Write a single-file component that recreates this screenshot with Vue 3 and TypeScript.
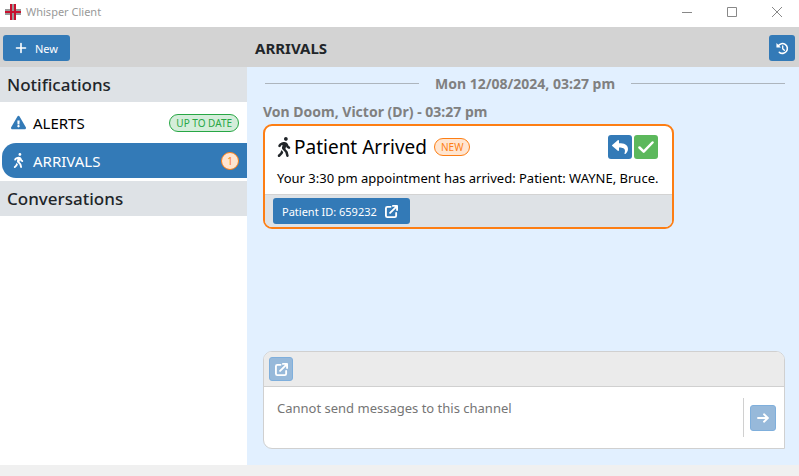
<script setup lang="ts">
import { ref } from 'vue'

interface Channel {
  name: string
  icon: 'alert' | 'walk'
  badge: string
  tone: 'ok' | 'new'
}

const channels: Channel[] = [
  { name: 'ALERTS', icon: 'alert', badge: 'UP TO DATE', tone: 'ok' },
  { name: 'ARRIVALS', icon: 'walk', badge: '1', tone: 'new' },
]
const active = ref('ARRIVALS')
const draft = ref('')
</script>

<template>
  <div class="window">
    <svg class="defs" width="0" height="0" aria-hidden="true">
      <symbol id="i-walk" viewBox="0 0 320 512">
        <path d="M208 96c26.500 0 48-21.500 48-48S234.500 0 208 0s-48 21.500-48 48 21.500 48 48 48zm94.500 149.100l-23.300-11.800-9.700-29.400c-14.700-44.600-55.700-75.800-102.200-75.900-36-.1-55.900 10.100-93.300 25.200-21.600 8.700-39.300 25.200-49.700 46.200L17.600 213c-7.800 15.800-1.500 35 14.200 42.900 15.600 7.900 34.600 1.500 42.500-14.300L81 228c3.500-7 9.300-12.500 16.500-15.400l26.800-10.800-15.200 60.700c-5.200 20.800.4 42.900 14.900 58.800l59.900 65.400c7.200 7.900 12.300 17.400 14.900 27.700l18.300 73.300c4.300 17.100 21.700 27.600 38.800 23.300 17.100-4.300 27.600-21.700 23.300-38.800l-22.200-89c-2.600-10.300-7.700-19.900-14.900-27.700l-45.500-49.700 17.200-68.700 5.500 16.500c5.300 16.100 16.700 29.400 31.700 37l23.300 11.800c15.600 7.900 34.600 1.500 42.500-14.300 7.700-15.700 1.400-35.100-14.300-43zM73.600 385.800c-3.200 8.100-8 15.400-14.200 21.500l-50 50.100c-12.500 12.500-12.500 32.800 0 45.300s32.700 12.500 45.200 0l59.400-59.400c6.100-6.100 10.900-13.400 14.200-21.500l13.500-33.800c-55.300-60.300-38.700-41.800-47.400-53.700l-20.700 51.500z" />
      </symbol>
      <symbol id="i-alert" viewBox="0 0 576 512">
        <path d="M569.517 440.013C587.975 472.007 564.806 512 527.940 512H48.054c-36.937 0-59.999-40.055-41.577-71.987L246.423 23.985c18.467-32.009 64.720-31.951 83.154 0l239.940 416.028zM288 354c-25.405 0-46 20.595-46 46s20.595 46 46 46 46-20.595 46-46-20.595-46-46-46zm-43.673-165.346l7.418 136c.347 6.364 5.609 11.346 11.982 11.346h48.546c6.373 0 11.635-4.982 11.982-11.346l7.418-136c.375-6.874-5.098-12.654-11.982-12.654h-63.383c-6.884 0-12.356 5.780-11.981 12.654z" />
      </symbol>
      <symbol id="i-reply" viewBox="0 0 512 512">
        <path d="M8.309 189.836L184.313 37.851C199.719 24.546 224 35.347 224 56.015v80.053c160.629 1.839 288 34.032 288 186.258 0 61.441-39.581 122.309-83.333 154.132-13.653 9.931-33.111-2.533-28.077-18.631 45.344-145.012-21.507-183.510-176.590-185.742V360c0 20.700-24.300 31.453-39.687 18.164l-176.004-152c-11.071-9.562-11.086-26.753 0-36.328z" />
      </symbol>
      <symbol id="i-open" viewBox="0 0 14 14">
        <path d="M6 2H2.500Q1 2 1 3.500v8Q1 13 2.500 13h8Q12 13 12 11.500V8.500M8.500 1H13v4.500M12.600 1.400L5.500 8.500" fill="none" stroke="currentColor" stroke-width="2" stroke-linecap="round" stroke-linejoin="round" />
      </symbol>
    </svg>

    <header class="titlebar">
      <svg class="logo" viewBox="0 0 16 16" aria-hidden="true">
        <path d="M0 5h16v6H0zM7 0h2v16H7z" fill="#999" />
        <path d="M0 7h16v2H0zM5 0h2v16H5zM9 0h2v16H9z" fill="#c8102e" />
      </svg>
      <span class="app-name">Whisper Client</span>
      <div class="window-controls">
        <button type="button" aria-label="Minimize"><svg viewBox="0 0 12 12"><path d="M1 6.500h10" /></svg></button>
        <button type="button" aria-label="Maximize"><svg viewBox="0 0 12 12"><path d="M1.500 1.500h9v9h-9z" /></svg></button>
        <button type="button" aria-label="Close"><svg viewBox="0 0 12 12"><path d="M1 1l10 10M11 1L1 11" /></svg></button>
      </div>
    </header>

    <div class="toolbar">
      <div class="toolbar-side">
        <button type="button" class="btn new-btn">
          <svg class="plus" viewBox="0 0 12 12" aria-hidden="true"><path d="M6 1.500v9M1.500 6h9" fill="none" stroke="currentColor" stroke-width="1.600" stroke-linecap="round" /></svg>
          New
        </button>
      </div>
      <h1>ARRIVALS</h1>
      <button type="button" class="btn square" aria-label="History">
        <svg class="icon14" viewBox="0 0 14 14" fill="none" aria-hidden="true">
          <path class="line" d="M2.400 4.200A5.300 5.300 0 1 1 3.600 11.100" stroke-width="1.700" />
          <path class="line" d="M7.200 4.300v2.900l1.800 1.700" stroke-width="1.400" />
          <path d="M.5 1v4.800h4.800z" />
        </svg>
      </button>
    </div>

    <div class="content">
      <nav class="sidebar">
        <h2>Notifications</h2>
        <div class="channels">
          <button
            v-for="c in channels"
            :key="c.name"
            type="button"
            class="channel"
            :class="{ active: active === c.name }"
            @click="active = c.name"
          >
            <svg class="channel-icon" aria-hidden="true"><use :href="'#i-' + c.icon" /></svg>
            <span class="channel-name">{{ c.name }}</span>
            <span class="badge" :class="[c.tone, { count: c.badge.length === 1 }]">{{ c.badge }}</span>
          </button>
        </div>
        <h2>Conversations</h2>
      </nav>

      <main class="chat">
        <div class="feed">
          <div class="date-row">Mon 12/08/2024, 03:27 pm</div>
          <p class="author">Von Doom, Victor (Dr) - 03:27 pm</p>
          <article class="card">
            <div class="card-body">
              <div class="card-head">
                <svg class="walk" aria-hidden="true"><use href="#i-walk" /></svg>
                <h3>Patient Arrived</h3>
                <span class="badge new">NEW</span>
                <div class="card-actions">
                  <button type="button" class="btn small" aria-label="Reply"><svg class="icon16" aria-hidden="true"><use href="#i-reply" /></svg></button>
                  <button type="button" class="btn small done" aria-label="Mark as done">
                    <svg class="icon16" viewBox="0 0 16 16" aria-hidden="true"><path d="M1.500 8.500l4.200 4.200L14.500 3.500" fill="none" stroke="currentColor" stroke-width="2.500" stroke-linecap="round" stroke-linejoin="round" /></svg>
                  </button>
                </div>
              </div>
              <p class="message">Your 3:30 pm appointment has arrived: Patient: WAYNE, Bruce.</p>
            </div>
            <footer>
              <button type="button" class="btn patient">Patient ID: 659232 <svg class="icon14" aria-hidden="true"><use href="#i-open" /></svg></button>
            </footer>
          </article>
        </div>

        <form class="composer" @submit.prevent>
          <div class="composer-tools">
            <button type="button" class="btn small muted" aria-label="Attach link" disabled><svg class="icon14" aria-hidden="true"><use href="#i-open" /></svg></button>
          </div>
          <div class="composer-row">
            <textarea v-model="draft" aria-label="Message" placeholder="Cannot send messages to this channel" disabled></textarea>
            <div class="send">
              <button type="submit" class="btn square muted" aria-label="Send" disabled>
                <svg class="icon12" viewBox="0 0 12 12" aria-hidden="true"><path d="M1 6h10M7 2.300L10.800 6 7 9.700" fill="none" stroke="currentColor" stroke-width="1.900" stroke-linecap="round" stroke-linejoin="round" /></svg>
              </button>
            </div>
          </div>
        </form>
      </main>
    </div>
    <div class="statusbar"></div>
  </div>
</template>

<style>
body { margin: 0; }
</style>

<style scoped>
.window {
  display: flex;
  flex-direction: column;
  min-height: 100vh;
  background: #fff;
  color: #212529;
  font-family: "Noto Sans", "Open Sans", sans-serif;
  font-size: 13px;
}
.window * { box-sizing: border-box; }
.defs { position: absolute; }
h1, h2, h3, p { margin: 0; }
button { font: inherit; color: inherit; border: 0; padding: 0; background: none; }
svg { fill: currentColor; flex: none; }
.line { fill: none; stroke: currentColor; stroke-linecap: round; stroke-linejoin: round; }

.titlebar { display: flex; align-items: center; height: 27px; padding: 0 0 4px 5px; }
.logo { width: 16px; height: 16px; }
.app-name { margin-left: 5px; font-size: 11px; color: #999; }
.window-controls { display: flex; margin-left: auto; }
.window-controls button { display: grid; place-items: center; width: 45px; height: 23px; }
.window-controls svg { width: 12px; height: 12px; fill: none; stroke: #888; stroke-width: 1; }

.toolbar { display: flex; align-items: center; height: 40px; padding: 2px 4px 0 3px; background: #d3d3d3; }
.toolbar-side { display: flex; width: 252px; }
.toolbar h1 { flex: 1; font-size: 15px; line-height: 20px; font-weight: 700; }

.btn {
  display: inline-flex;
  align-items: center;
  justify-content: center;
  height: 26px;
  border-radius: 3px;
  background: #337ab7;
  color: #fff;
  font-size: 11px;
}
.new-btn { gap: 8px; padding: 0 12px; }
.plus { width: 12px; height: 12px; }
.square { width: 26px; }
.small { width: 24px; height: 24px; }
.done { background: #5cb85c; }
.muted { background: #97b9da; border: 1px solid #7fafdc; }
.icon12 { width: 12px; height: 12px; }
.icon14 { width: 13px; height: 13px; }
.icon16 { width: 16px; height: 16px; }

.content { display: flex; flex: 1; }
.sidebar { width: 247px; flex: none; }
.sidebar h2 { height: 35px; padding-left: 7px; line-height: 35px; font-size: 17px; font-weight: 500; background: #dee2e6; }
.channels { display: flex; flex-direction: column; gap: 3px; padding: 3px 0 3px 2px; }
.channel {
  display: flex;
  align-items: center;
  height: 35px;
  padding: 0 8px 0 9px;
  border-radius: 14px 0 0 14px;
  text-align: left;
  font-size: 15px;
  color: #000;
}
.channel-icon { width: 15px; height: 15px; color: #337ab7; }
.channel-name { flex: 1; margin-left: 7px; }
.channel.active { background: #337ab7; color: #fff; }
.channel.active .channel-icon { color: #fff; }
.badge {
  display: inline-flex;
  align-items: center;
  justify-content: center;
  height: 18px;
  padding: 0 6px;
  border: 1px solid;
  border-radius: 9px;
  font-size: 10px;
}
.badge.ok { color: #28a745; background: #d4edda; }
.badge.new { color: #fd7e14; background: #ffe5d0; }
.badge.count { width: 18px; padding: 0; }

.chat { display: flex; flex: 1; flex-direction: column; min-width: 0; padding: 0 14px 16px 16px; background: #e2f0ff; }
.feed { flex: 1; }
.date-row { display: flex; align-items: center; gap: 16px; height: 32px; padding-left: 2px; font-size: 14px; font-weight: 700; color: #808080; }
.date-row::before, .date-row::after { content: ""; flex: 1; height: 1px; background: #adb5bd; }
.author { height: 25px; line-height: 26px; font-size: 14px; font-weight: 700; color: #808080; }
.card { width: fit-content; border: 2px solid #fd7e14; border-radius: 9px; overflow: hidden; background: #fff; }
.card-body { padding: 9px 14px 5px 12px; }
.card-head { display: flex; align-items: center; height: 24px; }
.walk { width: 14px; height: 20px; }
.card-head h3 { margin: 0 7px 0 3px; font-size: 19px; font-weight: 400; line-height: 24px; color: #000; }
.card-actions { display: flex; gap: 2px; margin-left: auto; }
.message { margin-top: 9px; line-height: 21px; color: #000; }
.card footer { display: flex; height: 33px; padding: 3px 8px; background: #dee2e6; border-top: 1px solid #d3d3d3; }
.patient { gap: 8px; padding: 0 12px 0 9px; }

.composer { border: 1px solid #d0d0d0; border-radius: 9px 9px 0 9px; overflow: hidden; background: #fff; }
.composer-tools { display: flex; align-items: center; height: 35px; padding: 0 5px; background: #ebebeb; border-bottom: 1px solid #d0d0d0; }
.composer-row { display: flex; align-items: center; height: 61px; }
textarea { flex: 1; height: 61px; padding: 12px 13px; border: 0; resize: none; background: none; font: inherit; line-height: 18px; }
textarea::placeholder { color: #757575; opacity: 1; }
.send { display: flex; align-items: center; height: 39px; padding: 0 8px 0 6px; border-left: 1px solid #d0d0d0; }
.statusbar { height: 11px; background: #f0f0f0; }
</style>
